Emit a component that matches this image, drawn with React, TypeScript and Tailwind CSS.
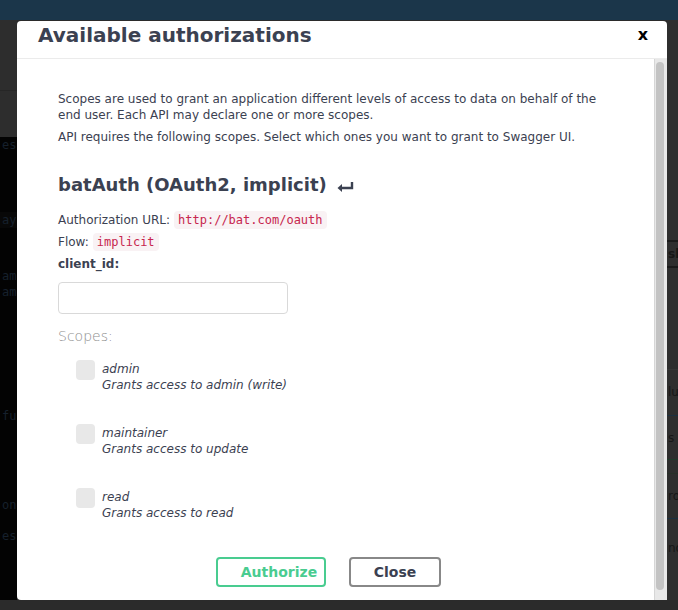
import React from 'react';

const scopes = [
  { name: 'admin', desc: 'Grants access to admin (write)' },
  { name: 'maintainer', desc: 'Grants access to update' },
  { name: 'read', desc: 'Grants access to read' },
];

function Code({ children }: { children: React.ReactNode }) {
  return (
    <code className="ml-[4px] inline-block h-[18px] rounded-[4px] bg-[#f9f2f4] px-[4px] font-['DejaVu_Sans_Mono',monospace] text-[12px] leading-[18px] text-[#c7254e]">
      {children}
    </code>
  );
}

function BackdropLeft() {
  return (
    <div className="flex w-[17px] flex-col overflow-hidden font-['DejaVu_Sans_Mono',monospace] text-[12px] text-[#16202c]">
      <div className="h-[71px] border-b border-[#262626] bg-[#2d2d2d]" />
      <div className="h-[46px] bg-[#2d2d2d]" />
      <div className="flex-1 bg-[#030303] pl-[2px]">
        <div className="leading-[16px]">esp</div>
        <div className="mt-[59px] -ml-[2px] bg-[#080808] pl-[2px] leading-[16px]">ay</div>
        <div className="mt-[40px] leading-[16px]">ame</div>
        <div className="leading-[16px]">ame</div>
        <div className="mt-[108px] leading-[16px]">fu</div>
        <div className="mt-[73px] leading-[16px]">one</div>
        <div className="mt-[15px] leading-[16px]">esp</div>
      </div>
    </div>
  );
}

function BackdropRight() {
  return (
    <div className="flex w-[11px] flex-col overflow-hidden bg-[#2e2e2e] font-['DejaVu_Sans',sans-serif] text-[12px] text-[#161616]">
      <div className="h-[220px]" />
      <div className="h-[28px] border-y-[2px] border-[#1a1a1a] pl-[1px] font-bold leading-[24px]">sh</div>
      <div className="h-[102px] border-b border-[#363636]" />
      <div className="h-[45px] pl-[1px] leading-[45px]">lu</div>
      <div className="h-[44px] border-t border-[#1c3040] pl-[1px] leading-[44px]">s</div>
      <div className="h-[14px] border-t border-[#1f3a2a]" />
      <div className="h-[45px] border-t border-[#283028] pl-[1px] leading-[45px]">ro</div>
      <div className="h-[15px] border-t border-[#1c3040]" />
      <div className="flex-1 pl-[1px] leading-[30px]">nd</div>
    </div>
  );
}

export default function App() {
  return (
    <div className="relative flex h-[610px] w-[678px] flex-col overflow-hidden bg-[#2b2b2b] font-['DejaVu_Sans',sans-serif]">
      <div className="h-[20px] bg-[#1b364a]" />
      <div className="flex flex-1">
        <BackdropLeft />
        <div className="flex-1" />
        <BackdropRight />
      </div>
      <div className="h-[10px] bg-[#2b2b2b]" />

      {/* modal */}
      <div className="absolute left-[17px] top-[21px] flex h-[579px] w-[650px] flex-col rounded-[4px] bg-white">
        <div className="flex h-[38px] items-center justify-between border-b border-[#ebebeb] pb-[10px] pl-[21px] pr-[19px]">
          <h3 className="text-[20px] font-bold text-[#3b4151]">Available authorizations</h3>
          <span className="text-[16px] font-bold leading-none text-black">x</span>
        </div>
        <div className="flex min-h-0 flex-1">
          <div className="flex-1 pl-[41px] pr-[41px] pt-[32px] text-[12px] text-[#3b4151]">
            <p className="leading-[16px]">
              Scopes are used to grant an application different levels of access to data on behalf of the end user. Each API may declare one or more scopes.
            </p>
            <p className="mt-[6px] leading-[16px]">
              API requires the following scopes. Select which ones you want to grant to Swagger UI.
            </p>

            <h4 className="mt-[29px] flex items-center text-[18px] font-bold leading-[22px]">
              batAuth (OAuth2, implicit)
              <svg className="ml-[10px] mt-[2px]" width="17" height="11" viewBox="0 0 17 11">
                <path d="M15 1v6H4" fill="none" stroke="#3b4151" strokeWidth="2.4" />
                <path d="M0.5 7L5 3v8z" fill="#3b4151" />
              </svg>
            </h4>

            <div className="mt-[13px] flex h-[22px] items-center">
              Authorization URL:
              <Code>http://bat.com/oauth</Code>
            </div>
            <div className="flex h-[22px] items-center">
              Flow:
              <Code>implicit</Code>
            </div>
            <div className="flex h-[22px] items-center font-bold">client_id:</div>
            <div className="mt-[7px] h-[32px] w-[230px] rounded-[4px] border border-[#d9d9d9] bg-white" />

            <div className="mt-[12px] text-[14px] font-light leading-[20px] text-[#8e8e8e]">Scopes:</div>

            <div className="mt-[15px] flex flex-col gap-[32px] pl-[18px]">
              {scopes.map((s) => (
                <div key={s.name} className="flex">
                  <div className="mr-[7px] mt-[-1px] h-[20px] w-[19px] rounded-[4px] bg-[#e8e8e8]" />
                  <div className="italic leading-[16px]">
                    <div>{s.name}</div>
                    <div>{s.desc}</div>
                  </div>
                </div>
              ))}
            </div>

            <div className="mt-[36px] flex justify-center gap-[23px] pr-[14px]">
              <button className="h-[30px] w-[110px] rounded-[4px] border-2 border-[#49cc90] pl-[16px] text-[14px] font-bold text-[#49cc90]">
                Authorize
              </button>
              <button className="h-[30px] w-[92px] rounded-[4px] border-2 border-[#888888] text-[14px] font-bold text-[#3b4151]">
                Close
              </button>
            </div>
          </div>
          {/* scrollbar */}
          <div className="flex w-[13px] border-l border-[#d6d6d6] bg-[#e8e8e8] pb-[10px] pl-[1px] pt-[3px]">
            <div className="w-[8px] rounded-full bg-[#c3c3c3]" />
          </div>
        </div>
      </div>
    </div>
  );
}
